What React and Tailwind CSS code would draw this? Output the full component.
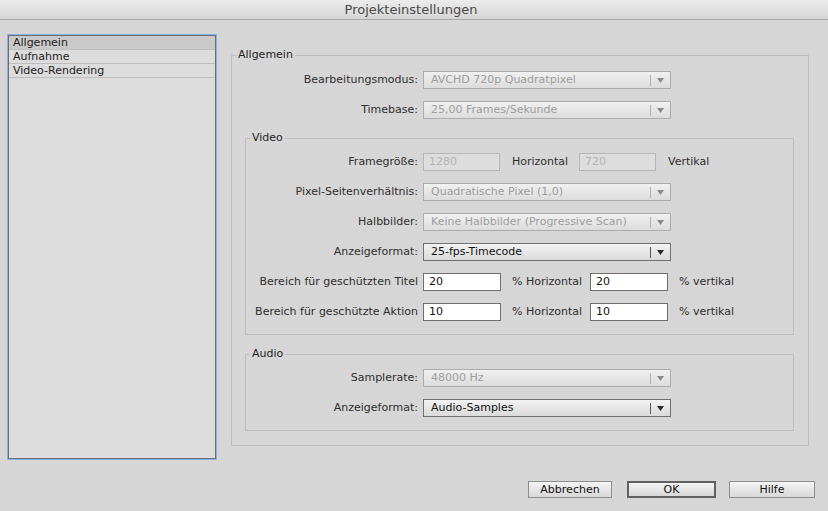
import React from "react";

function Arrow({ disabled }) {
  return (
    <svg width="7" height="5" viewBox="0 0 7 5" className="mx-[6px] shrink-0">
      <polygon points="0,0 7,0 3.5,5" fill={disabled ? "#8a8a8a" : "#2a2a2a"} />
    </svg>
  );
}

function Select({ value, disabled }) {
  return (
    <div
      className={
        disabled
          ? "ml-[5px] flex items-center h-[18px] w-[248px] border border-[#acacac] text-[#9d9d9d] bg-gradient-to-b from-[#f0f0f0] to-[#dcdcdc]"
          : "ml-[5px] flex items-center h-[18px] w-[248px] border border-[#707070] text-[#111111] bg-gradient-to-b from-[#f3f3f3] to-[#dadada]"
      }
    >
      <span className="flex-1 pl-[7px] leading-[16px] whitespace-nowrap">{value}</span>
      <span className={disabled ? "w-px h-[11px] bg-[#b0b0b0]" : "w-px h-[11px] bg-[#555555]"} />
      <Arrow disabled={disabled} />
    </div>
  );
}

function Input({ value, disabled, w }) {
  return (
    <div
      className={
        (disabled
          ? "border border-[#b6b6b6] bg-[#dddddd] text-[#b3b3b3]"
          : "border border-[#6e6e6e] bg-white text-[#111111]") +
        " h-[18px] pl-[5px] leading-[16px] " +
        w
      }
    >
      {value}
    </div>
  );
}

function Row({ label, lw, children }) {
  return (
    <div className="flex items-center h-[18px]">
      <span className={"text-right whitespace-nowrap text-[#2e2e2e] " + lw}>{label}</span>
      {children}
    </div>
  );
}

export default function App() {
  return (
    <div className="w-[828px] h-[511px] bg-[#d6d6d6] flex flex-col font-['DejaVu_Sans',sans-serif] text-[11px] overflow-hidden">
      <div className="h-[20px] shrink-0 border-b border-[#a9a9a9] bg-gradient-to-b from-[#ececec] to-[#d5d5d5] flex items-center justify-center">
        <span className="text-[13px] text-[#4a4a4a] leading-[19px] mr-[6px]">Projekteinstellungen</span>
      </div>

      <div className="flex items-start pl-[8px] pt-[15px]">
        <div className="w-[208px] h-[424px] shrink-0 border border-[#6d6d6d] bg-[#dcdcdc] shadow-[0_0_0_1px_#86b1ea] flex flex-col">
          <div className="h-[14px] border-b border-[#bdbdbd] bg-[#c9c9c9] pl-[4px] leading-[13px] text-[#222222]">Allgemein</div>
          <div className="h-[14px] border-b border-[#bdbdbd] pl-[4px] leading-[13px] text-[#222222]">Aufnahme</div>
          <div className="h-[14px] border-b border-[#bdbdbd] pl-[4px] leading-[13px] text-[#222222]">Video-Rendering</div>
        </div>

        <fieldset className="ml-[15px] mt-[13px] w-[578px] border border-[#bdbdbd] p-0 m-0">
          <legend className="ml-[4px] px-[2px] leading-[14px] text-[#1e1e1e]">Allgemein</legend>
          <div className="pt-[9px] pl-[13px] pr-[14px] pb-[14px] flex flex-col gap-[12px]">
            <Row label="Bearbeitungsmodus:" lw="w-[173px]">
              <Select value="AVCHD 720p Quadratpixel" disabled />
            </Row>
            <Row label="Timebase:" lw="w-[173px]">
              <Select value="25,00 Frames/Sekunde" disabled />
            </Row>

            <fieldset className="border border-[#bdbdbd] p-0 m-0">
              <legend className="ml-[4px] px-[2px] leading-[14px] text-[#1e1e1e]">Video</legend>
              <div className="pt-[8px] pb-[13px] flex flex-col gap-[12px]">
                <Row label="Framegröße:" lw="w-[172px]">
                  <div className="ml-[5px]" />
                  <Input value="1280" disabled w="w-[77px]" />
                  <span className="ml-[12px] w-[67px] text-[#2e2e2e]">Horizontal</span>
                  <Input value="720" disabled w="w-[77px]" />
                  <span className="ml-[12px] text-[#2e2e2e]">Vertikal</span>
                </Row>
                <Row label="Pixel-Seitenverhältnis:" lw="w-[172px]">
                  <Select value="Quadratische Pixel (1,0)" disabled />
                </Row>
                <Row label="Halbbilder:" lw="w-[172px]">
                  <Select value="Keine Halbbilder (Progressive Scan)" disabled />
                </Row>
                <Row label="Anzeigeformat:" lw="w-[172px]">
                  <Select value="25-fps-Timecode" />
                </Row>
                <Row label="Bereich für geschützten Titel" lw="w-[172px]">
                  <div className="ml-[5px]" />
                  <Input value="20" w="w-[78px]" />
                  <span className="ml-[11px] w-[78px] text-[#2e2e2e]">% Horizontal</span>
                  <Input value="20" w="w-[78px]" />
                  <span className="ml-[11px] text-[#2e2e2e]">% vertikal</span>
                </Row>
                <Row label="Bereich für geschützte Aktion" lw="w-[172px]">
                  <div className="ml-[5px]" />
                  <Input value="10" w="w-[78px]" />
                  <span className="ml-[11px] w-[78px] text-[#2e2e2e]">% Horizontal</span>
                  <Input value="10" w="w-[78px]" />
                  <span className="ml-[11px] text-[#2e2e2e]">% vertikal</span>
                </Row>
              </div>
            </fieldset>

            <fieldset className="border border-[#bdbdbd] p-0 m-0">
              <legend className="ml-[4px] px-[2px] leading-[14px] text-[#1e1e1e]">Audio</legend>
              <div className="pt-[8px] pb-[13px] flex flex-col gap-[12px]">
                <Row label="Samplerate:" lw="w-[172px]">
                  <Select value="48000 Hz" disabled />
                </Row>
                <Row label="Anzeigeformat:" lw="w-[172px]">
                  <Select value="Audio-Samples" />
                </Row>
              </div>
            </fieldset>
          </div>
        </fieldset>
      </div>

      <div className="flex justify-end pr-[13px] mt-[22px]">
        <button className="w-[84px] h-[17px] border border-[#8c8c8c] bg-gradient-to-b from-[#f4f4f4] to-[#d8d8d8] text-[#111111] leading-[15px]">Abbrechen</button>
        <button className="ml-[15px] w-[89px] h-[17px] border-2 border-[#606060] bg-gradient-to-b from-[#f4f4f4] to-[#d8d8d8] text-[#111111] leading-[13px]">OK</button>
        <button className="ml-[13px] w-[86px] h-[17px] border border-[#8c8c8c] bg-gradient-to-b from-[#f4f4f4] to-[#d8d8d8] text-[#111111] leading-[15px]">Hilfe</button>
      </div>
    </div>
  );
}
